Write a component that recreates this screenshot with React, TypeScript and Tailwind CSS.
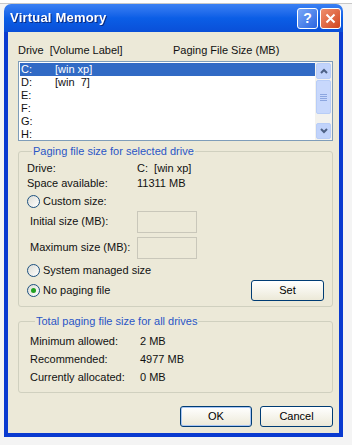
import React from "react";

const font = { fontFamily: "'Liberation Sans', Arial, sans-serif" };

const Radio = ({ checked }: { checked?: boolean }) => (
  <span className="w-[13px] h-[13px] rounded-full border border-[#1c5180] bg-gradient-to-br from-[#dcdcd5] to-white flex items-center justify-center mr-[3px]">
    {checked && <span className="w-[5px] h-[5px] rounded-full bg-[#21a121]" />}
  </span>
);

const XpButton = ({ label, className }: { label: string; className?: string }) => (
  <div
    className={
      "h-[21px] rounded-[3px] border border-[#003c74] bg-gradient-to-b from-white to-[#ece9d8] flex items-center justify-center text-black " +
      (className ?? "")
    }
  >
    {label}
  </div>
);

const drives = [
  ["C:", "[win xp]"],
  ["D:", "[win  7]"],
  ["E:", ""],
  ["F:", ""],
  ["G:", ""],
  ["H:", ""],
];

export default function App() {
  return (
    <div className="w-[352px] h-[445px] bg-[#f4f4f4] overflow-hidden text-[11px] text-[#111] whitespace-nowrap" style={font}>
      <div className="h-[4px] bg-white border-b border-[#c8c8c8]" />
      <div className="ml-[4px] w-[339px] h-[433px] flex flex-col">
        {/* title bar */}
        <div className="h-[28px] rounded-t-[7px] bg-gradient-to-b from-[#3a80f3] via-[#0b5ee6] to-[#0a4fd8] flex items-center pl-[6px] pr-[2px]">
          <span className="text-white font-bold text-[13px] tracking-[0.2px] drop-shadow-[1px_1px_0_#0a2a80]">
            Virtual Memory
          </span>
          <div className="ml-auto flex gap-[2px]">
            <div className="w-[21px] h-[21px] rounded-[3px] border border-white bg-gradient-to-br from-[#7aa7f7] to-[#2a64e0] flex items-center justify-center text-white font-bold text-[14px]">
              ?
            </div>
            <div className="w-[21px] h-[21px] rounded-[3px] border border-white bg-gradient-to-br from-[#ef8f6c] to-[#d1431b] flex items-center justify-center">
              <svg width="11" height="11" viewBox="0 0 11 11">
                <path d="M1.5 1.5 L9.5 9.5 M9.5 1.5 L1.5 9.5" stroke="white" strokeWidth="2" />
              </svg>
            </div>
          </div>
        </div>
        {/* client */}
        <div className="flex-1 flex flex-col bg-[#ece9d8] border-l-[4px] border-r-[4px] border-b-[4px] border-[#0a3ad0] pl-[10px] pr-[6px]">
          <div className="flex mt-[12px] h-[13px] items-center">
            <span className="w-[155px]">Drive&nbsp;&nbsp;[Volume Label]</span>
            <span>Paging File Size (MB)</span>
          </div>
          <div className="mt-[4px] h-[80px] w-[315px] border border-[#7f9db9] bg-white flex">
            <div className="flex-1 pt-[1px] pl-[1px]">
              {drives.map(([d, l], i) => (
                <div
                  key={d}
                  className={
                    "h-[13px] flex items-center pl-[1px] " + (i === 0 ? "bg-[#316ac5] text-white" : "")
                  }
                >
                  <span className="w-[34px]">{d}</span>
                  <span className="whitespace-pre">{l}</span>
                </div>
              ))}
            </div>
            <div className="w-[17px] flex flex-col bg-[#f3f2ee] p-[1px] gap-[1px]">
              <div className="h-[16px] rounded-[2px] border border-[#b8cdf7] bg-[#c1d3fb] flex items-center justify-center">
                <svg width="8" height="6" viewBox="0 0 8 6">
                  <path d="M1 5 L4 2 L7 5" stroke="#4d6185" strokeWidth="2" fill="none" />
                </svg>
              </div>
              <div className="flex-1 rounded-[2px] border border-[#b8cdf7] bg-[#c8d8fc] flex flex-col items-center justify-center gap-[1px]">
                <div className="w-[7px] h-[1px] bg-[#8ca6e0]" />
                <div className="w-[7px] h-[1px] bg-[#8ca6e0]" />
                <div className="w-[7px] h-[1px] bg-[#8ca6e0]" />
                <div className="w-[7px] h-[1px] bg-[#8ca6e0]" />
              </div>
              <div className="h-[7px]" />
              <div className="h-[16px] rounded-[2px] border border-[#b8cdf7] bg-[#c1d3fb] flex items-center justify-center">
                <svg width="8" height="6" viewBox="0 0 8 6">
                  <path d="M1 1 L4 4 L7 1" stroke="#4d6185" strokeWidth="2" fill="none" />
                </svg>
              </div>
            </div>
          </div>

          <fieldset className="mt-[2px] w-[315px] h-[164px] border border-[#d0d0bf] rounded-[3px] px-[8px]">
            <legend className="text-[#2a56c6] px-[1px] ml-[5px]">Paging file size for selected drive</legend>
            <div className="flex h-[15px] items-center mt-[1px]">
              <span className="w-[110px]">Drive:</span>
              <span>C:&nbsp;&nbsp;[win xp]</span>
            </div>
            <div className="flex h-[15px] items-center">
              <span className="w-[110px]">Space available:</span>
              <span>11311 MB</span>
            </div>
            <div className="flex items-center h-[18px] mt-[2px]">
              <Radio />
              <span>Custom size:</span>
            </div>
            <div className="flex items-center h-[22px] pl-[3px]">
              <span className="w-[107px]">Initial size (MB):</span>
              <div className="w-[60px] h-[22px] border border-[#c9c7ba] bg-[#ece9d8]" />
            </div>
            <div className="flex items-center h-[22px] mt-[4px] pl-[3px]">
              <span className="w-[107px]">Maximum size (MB):</span>
              <div className="w-[60px] h-[22px] border border-[#c9c7ba] bg-[#ece9d8]" />
            </div>
            <div className="flex items-center h-[18px] mt-[3px]">
              <Radio />
              <span>System managed size</span>
            </div>
            <div className="flex items-center h-[20px] mt-[1px]">
              <Radio checked />
              <span>No paging file</span>
              <XpButton label="Set" className="ml-auto mr-[0px] w-[73px]" />
            </div>
          </fieldset>

          <fieldset className="mt-[6px] w-[315px] h-[80px] border border-[#d0d0bf] rounded-[3px] px-[11px]">
            <legend className="text-[#2a56c6] px-[1px] ml-[5px]">Total paging file size for all drives</legend>
            <div className="flex h-[18px] items-center mt-[3px]">
              <span className="w-[110px]">Minimum allowed:</span>
              <span>2 MB</span>
            </div>
            <div className="flex h-[18px] items-center">
              <span className="w-[110px]">Recommended:</span>
              <span>4977 MB</span>
            </div>
            <div className="flex h-[18px] items-center">
              <span className="w-[110px]">Currently allocated:</span>
              <span>0 MB</span>
            </div>
          </fieldset>

          <div className="flex justify-end gap-[8px] mt-[13px] pr-[0px]">
            <XpButton label="OK" className="w-[72px] shadow-[inset_0_0_0_1px_#a9c6f4]" />
            <XpButton label="Cancel" className="w-[73px]" />
          </div>
        </div>
      </div>
    </div>
  );
}
